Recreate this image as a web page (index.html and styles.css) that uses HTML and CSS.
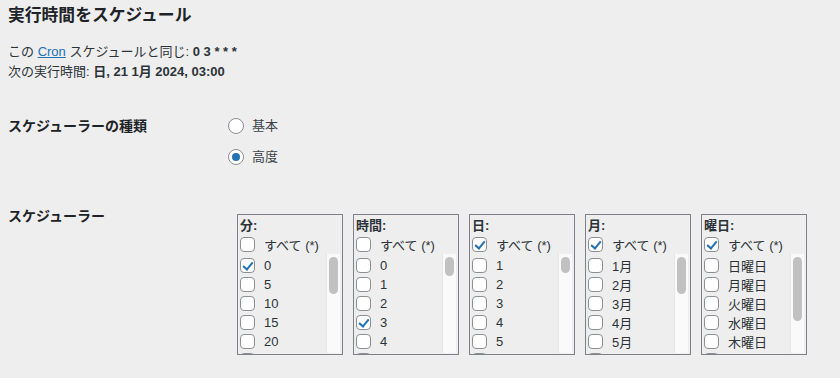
FILE: index.html
```html
<!DOCTYPE html>
<html lang="ja">
<head>
    <meta charset="UTF-8">
    <meta name="viewport" content="width=device-width, initial-scale=1.0">
    <title>実行時間をスケジュール</title>
    <link rel="stylesheet" href="styles.css">
</head>
<body>
    <div class="wrap">
        <h2 class="title">実行時間をスケジュール</h2>
        <p class="info">
            この <a href="#">Cron</a> スケジュールと同じ: <b>0 3 * * *</b><br>
            次の実行時間: <b class="semi">日, 21 1月 2024, 03:00</b>
        </p>

        <div class="field-row first">
            <div class="field-label">スケジューラーの種類</div>
            <div class="field-input radios">
                <label class="radio"><input type="radio" name="type"> 基本</label>
                <label class="radio"><input type="radio" name="type" checked> 高度</label>
            </div>
        </div>

        <div class="field-row second">
            <div class="field-label">スケジューラー</div>
            <div class="field-input boxes">
                <div class="pick">
                    <div class="pick-head">分:</div>
                    <label class="opt"><input type="checkbox"> すべて (*)</label>
                    <div class="pick-body">
                        <div class="pick-list" id="minutes"></div>
                        <div class="track"><div class="thumb"></div></div>
                    </div>
                </div>
                <div class="pick">
                    <div class="pick-head">時間:</div>
                    <label class="opt"><input type="checkbox"> すべて (*)</label>
                    <div class="pick-body">
                        <div class="pick-list" id="hours"></div>
                        <div class="track"><div class="thumb"></div></div>
                    </div>
                </div>
                <div class="pick">
                    <div class="pick-head">日:</div>
                    <label class="opt"><input type="checkbox" checked> すべて (*)</label>
                    <div class="pick-body">
                        <div class="pick-list" id="days"></div>
                        <div class="track"><div class="thumb"></div></div>
                    </div>
                </div>
                <div class="pick">
                    <div class="pick-head">月:</div>
                    <label class="opt"><input type="checkbox" checked> すべて (*)</label>
                    <div class="pick-body">
                        <div class="pick-list" id="months"></div>
                        <div class="track"><div class="thumb"></div></div>
                    </div>
                </div>
                <div class="pick">
                    <div class="pick-head">曜日:</div>
                    <label class="opt"><input type="checkbox" checked> すべて (*)</label>
                    <div class="pick-body">
                        <div class="pick-list" id="weekdays"></div>
                        <div class="track"><div class="thumb"></div></div>
                    </div>
                </div>
            </div>
        </div>
    </div>

    <script>
        function fill(id, items, checked) {
            const list = document.getElementById(id);
            items.forEach(function (text) {
                const label = document.createElement("label");
                label.className = "opt";
                const box = document.createElement("input");
                box.type = "checkbox";
                box.checked = text === checked;
                label.appendChild(box);
                label.appendChild(document.createTextNode(" " + text));
                list.appendChild(label);
            });
            // fake scroll thumb, sized like the real one
            const thumb = list.parentNode.querySelector(".thumb");
            const ratio = list.clientHeight / (items.length * 19);
            thumb.style.height = Math.max(16, Math.round(ratio * 85)) + "px";
        }

        const minutes = [];
        for (let i = 0; i < 60; i += 5) minutes.push(String(i));
        const hours = [];
        for (let i = 0; i < 24; i++) hours.push(String(i));
        const days = [];
        for (let i = 1; i <= 31; i++) days.push(String(i));
        const months = [];
        for (let i = 1; i <= 12; i++) months.push(i + "月");

        fill("minutes", minutes, "0");
        fill("hours", hours, "3");
        fill("days", days);
        fill("months", months);
        fill("weekdays", ["日曜日", "月曜日", "火曜日", "水曜日", "木曜日", "金曜日", "土曜日"]);
    </script>
</body>
</html>
```

FILE: styles.css
```css
* {
    margin: 0;
    padding: 0;
    box-sizing: border-box;
}
body {
    background: #eeeeee;
    font-family: "Liberation Sans", "Noto Sans CJK JP", sans-serif;
    font-size: 13px;
    color: #1d2327;
}
.wrap {
    padding: 0 8px;
}
.title {
    margin-top: 5px;
    font-size: 16.8px;
    line-height: 22px;
    font-weight: 700;
}
.info {
    margin-top: 15px;
    line-height: 20px;
    color: #2c3338;
}
.info a {
    color: #2271b1;
}
.info b {
    font-weight: 700;
}
.info .semi {
    font-weight: 600;
}
.field-row {
    display: grid;
    grid-template-columns: 220px 1fr;
}
.field-row.first {
    margin-top: 34px;
}
.field-row.second {
    margin-top: 39px;
}
.field-label {
    font-size: 14px;
    font-weight: 700;
    line-height: 20px;
}
.radios {
    display: flex;
    flex-direction: column;
    gap: 11px;
}
.radio {
    display: flex;
    align-items: center;
    gap: 8px;
    line-height: 20px;
    color: #3c434a;
}
.radio input {
    appearance: none;
    width: 16px;
    height: 16px;
    border: 1px solid #8c8f94;
    border-radius: 50%;
    background: #fff;
    display: grid;
    place-items: center;
}
.radio input:checked::before {
    content: "";
    width: 8px;
    height: 8px;
    border-radius: 50%;
    background: #2271b1;
}
.boxes {
    display: flex;
    gap: 10px;
    margin: 8px 0 0 9px;
}
.pick {
    width: 106px;
    height: 141px;
    border: 1px solid #7e8287;
    padding: 1px 2px 0 2px;
    display: flex;
    flex-direction: column;
}
.pick-head {
    font-weight: 700;
    line-height: 19px;
    color: #2c3338;
}
.opt {
    display: flex;
    align-items: center;
    gap: 9px;
    height: 19px;
    flex-shrink: 0;
    color: #2c3338;
}
.opt input {
    appearance: none;
    width: 15px;
    height: 15px;
    border: 1px solid #8c8f94;
    border-radius: 4px;
    background: #fff;
    position: relative;
    flex-shrink: 0;
}
.opt input:checked::before {
    content: "";
    position: absolute;
    left: 4px;
    top: 1px;
    width: 4px;
    height: 8px;
    border-right: 2.5px solid #2271b1;
    border-bottom: 2.5px solid #2271b1;
    transform: rotate(40deg);
}
.pick-body {
    flex: 1;
    min-height: 0;
    display: flex;
}
.pick-list {
    flex: 1;
    overflow: hidden;
    padding-top: 2px;
    display: flex;
    flex-direction: column;
}
.track {
    width: 14px;
    margin-bottom: 1px;
    background: #fafafa;
    border-left: 1px solid #e6e6e6;
    padding: 3px 2px 0 2px;
}
.thumb {
    background: #c1c1c1;
    border-radius: 5px;
}
```
